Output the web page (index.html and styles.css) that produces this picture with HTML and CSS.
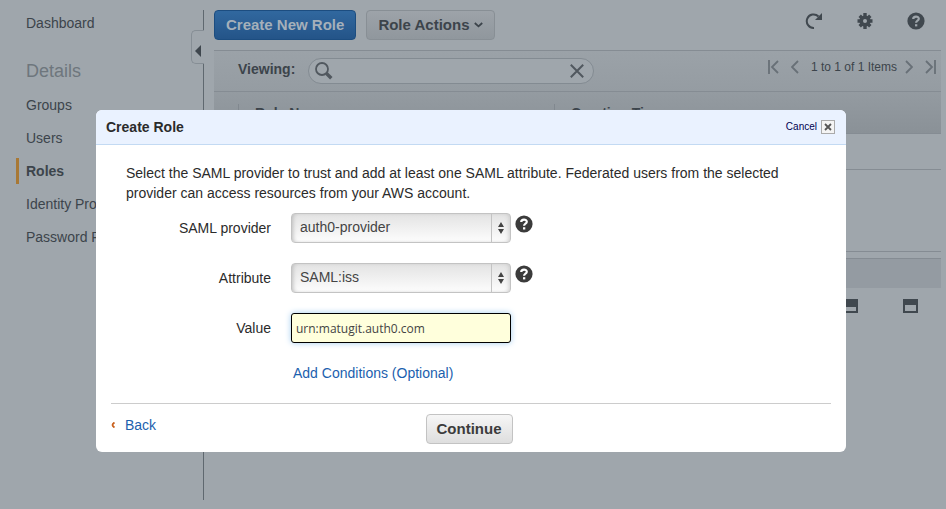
FILE: index.html
```html
<!DOCTYPE html>
<html lang="en">
<head>
<meta charset="utf-8">
<title>Create Role</title>
<link rel="stylesheet" href="styles.css">
</head>
<body>
<div class="console">
  <nav class="sidebar">
    <a class="nav-link" href="#">Dashboard</a>
    <h2 class="nav-heading">Details</h2>
    <a class="nav-link" href="#">Groups</a>
    <a class="nav-link" href="#">Users</a>
    <a class="nav-link nav-current" href="#">Roles</a>
    <a class="nav-link" href="#">Identity Providers</a>
    <a class="nav-link" href="#">Password Policy</a>
    <button class="collapse" type="button" aria-label="Collapse sidebar">
      <svg width="6" height="12" viewBox="0 0 6 12"><path d="M6 0v12L0 6z" fill="#3f474e"/></svg>
    </button>
  </nav>
  <main class="main">
    <div class="toolbar">
      <button class="btn btn-primary" type="button">Create New Role</button>
      <button class="btn btn-muted" type="button">Role Actions
        <svg width="9" height="6" viewBox="0 0 9 6"><path d="M.8 1l3.7 3.4L8.200 1" fill="none" stroke="#3c444b" stroke-width="1.800"/></svg>
      </button>
      <div class="tools">
        <button class="icon-btn" type="button" aria-label="Refresh">
          <svg width="18" height="18" viewBox="0 0 18 18"><path d="M9 16A6.800 6.800 0 1 1 13.500 4.500" fill="none" stroke="#40484f" stroke-width="2"/><path d="M17 1v7h-7z" fill="#40484f"/></svg>
        </button>
        <button class="icon-btn" type="button" aria-label="Settings">
          <svg width="18" height="18" viewBox="0 0 18 18"><g stroke="#40484f" stroke-width="3.400"><path d="M9 1v16M1.500 9h15M3.700 3.700l10.600 10.600M14.300 3.700L3.700 14.300"/></g><circle cx="9" cy="9" r="5.600" fill="#40484f"/><circle cx="9" cy="9" r="2" fill="#9fa6ac"/></svg>
        </button>
        <button class="icon-btn" type="button" aria-label="Help">
          <svg width="18" height="18" viewBox="0 0 18 18"><circle cx="9" cy="9" r="8.600" fill="#40484f"/><path d="M6.200 7.100C6.200 3.800 11.800 3.700 11.800 6.800C11.800 8.700 9.100 8.600 9.100 10.700" fill="none" stroke="#9fa6ac" stroke-width="2.200"/><path d="M8 12.200h2.300v2.200H8z" fill="#9fa6ac"/></svg>
        </button>
      </div>
    </div>
    <div class="filter">
      <label class="filter-label" for="search">Viewing:</label>
      <div class="search">
        <svg width="18" height="18" viewBox="0 0 18 18" fill="none" stroke="#51585f"><circle cx="7" cy="7" r="6" stroke-width="1.800"/><path d="M11.500 11.500l4.800 4.800" stroke-width="3.400"/></svg>
        <input class="search-input" id="search" type="text">
        <button class="icon-btn" type="button" aria-label="Clear">
          <svg width="14" height="14" viewBox="0 0 14 14"><path d="M.8.8l12.400 12.400M13.200.8L.8 13.200" fill="none" stroke="#51585f" stroke-width="2"/></svg>
        </button>
      </div>
      <div class="pager">
        <button class="icon-btn" type="button" aria-label="First page"><svg width="11" height="14" viewBox="0 0 11 14"><path d="M1 0v14M10 1L4 7l6 6" fill="none" stroke="#687077" stroke-width="1.800"/></svg></button>
        <button class="icon-btn" type="button" aria-label="Previous page"><svg width="8" height="14" viewBox="0 0 8 14"><path d="M7 1L1 7l6 6" fill="none" stroke="#687077" stroke-width="1.800"/></svg></button>
        <span class="pager-text">1 to 1 of 1 Items</span>
        <span class="pager-next">
          <button class="icon-btn" type="button" aria-label="Next page"><svg width="8" height="14" viewBox="0 0 8 14"><path d="M1 1l6 6-6 6" fill="none" stroke="#687077" stroke-width="1.800"/></svg></button>
          <button class="icon-btn" type="button" aria-label="Last page"><svg width="11" height="14" viewBox="0 0 11 14"><path d="M10 0v14M1 1l6 6-6 6" fill="none" stroke="#687077" stroke-width="1.800"/></svg></button>
        </span>
      </div>
    </div>
    <table class="roles">
      <colgroup><col class="col-pick"><col class="col-name"><col></colgroup>
      <thead><tr><th></th><th><div class="th-text">Role Name</div></th><th><div class="th-text">Creation Time</div></th></tr></thead>
      <tbody><tr><td></td><td></td><td></td></tr></tbody>
    </table>
    <div class="list-rest"></div>
    <div class="splitter"></div>
    <div class="panes">
      <button class="icon-btn" type="button" aria-label="Half pane"><svg width="15" height="14" viewBox="0 0 15 14"><path d="M0 0h15v14H0zM2 8v4h11V8z" fill="#40484f" fill-rule="evenodd"/></svg></button>
      <button class="icon-btn" type="button" aria-label="Full pane"><svg width="15" height="14" viewBox="0 0 15 14"><path d="M0 0h15v14H0zM2 6v6h11V6z" fill="#40484f" fill-rule="evenodd"/></svg></button>
    </div>
  </main>
</div>

<form class="dialog" role="dialog" aria-labelledby="dialog-title">
  <header class="dialog-head">
    <h1 class="dialog-title" id="dialog-title">Create Role</h1>
    <button class="cancel" type="button">Cancel
      <span class="cancel-box"><svg width="8" height="8" viewBox="0 0 8 8"><path d="M1 1l6 6M7 1L1 7" stroke="#555" stroke-width="1.800"/></svg></span>
    </button>
  </header>
  <div class="dialog-body">
    <p class="intro">Select the SAML provider to trust and add at least one SAML attribute. Federated users from the selected provider can access resources from your AWS account.</p>
    <div class="field">
      <label class="field-label" for="provider">SAML provider</label>
      <div class="picker">
        <select class="select" id="provider"><option>auth0-provider</option></select>
        <span class="arrows"><svg width="6" height="12" viewBox="0 0 6 12"><path d="M0 5l3-5 3 5zM0 7h6l-3 5z" fill="#444"/></svg></span>
      </div>
      <button class="icon-btn help" type="button" aria-label="About SAML provider">
        <svg width="18" height="18" viewBox="0 0 18 18"><circle cx="9" cy="9" r="8.600" fill="#3b3b3b"/><path d="M6.200 7.100C6.200 3.800 11.800 3.700 11.800 6.800C11.800 8.700 9.100 8.600 9.100 10.700" fill="none" stroke="#fff" stroke-width="2.200"/><path d="M8 12.200h2.300v2.200H8z" fill="#fff"/></svg>
      </button>
    </div>
    <div class="field">
      <label class="field-label" for="attribute">Attribute</label>
      <div class="picker">
        <select class="select" id="attribute"><option>SAML:iss</option></select>
        <span class="arrows"><svg width="6" height="12" viewBox="0 0 6 12"><path d="M0 5l3-5 3 5zM0 7h6l-3 5z" fill="#444"/></svg></span>
      </div>
      <button class="icon-btn help" type="button" aria-label="About attribute">
        <svg width="18" height="18" viewBox="0 0 18 18"><circle cx="9" cy="9" r="8.600" fill="#3b3b3b"/><path d="M6.200 7.100C6.200 3.800 11.800 3.700 11.800 6.800C11.800 8.700 9.100 8.600 9.100 10.700" fill="none" stroke="#fff" stroke-width="2.200"/><path d="M8 12.200h2.300v2.200H8z" fill="#fff"/></svg>
      </button>
    </div>
    <div class="field">
      <label class="field-label" for="value">Value</label>
      <input class="value" id="value" type="text" value="urn:matugit.auth0.com">
    </div>
    <a class="conditions" href="#">Add Conditions (Optional)</a>
  </div>
  <footer class="dialog-foot">
    <a class="back" href="#"><svg width="4" height="6" viewBox="0 0 4 6"><path d="M3.500.5Q-.5 3 3.500 5.500" fill="none" stroke="#c9601c" stroke-width="1.800"/></svg>Back</a>
    <button class="btn continue" type="submit">Continue</button>
  </footer>
</form>
</body>
</html>
```
FILE: styles.css
```css
* { box-sizing: border-box; }

body {
  margin: 0;
  min-height: 100vh;
  background: #9fa6ac;
  color: #3c444b;
  font: 14px/20px "Liberation Sans", Arial, sans-serif;
  overflow: hidden;
}

button, input, select { font: inherit; color: inherit; }
svg { display: block; }
a { text-decoration: none; }

.icon-btn {
  padding: 0;
  border: 0;
  background: none;
}

.console {
  display: flex;
  gap: 10px;
  height: 100vh;
  padding: 10px 5px 9px 0;
}

.sidebar {
  position: relative;
  display: flex;
  flex-direction: column;
  flex: 0 0 204px;
  border-right: 1px solid #5f686f;
}

.nav-link {
  height: 26px;
  margin: 0 0 7px 16px;
  padding-left: 10px;
  color: #3c444b;
  line-height: 26px;
  white-space: nowrap;
}

.nav-current {
  padding-left: 7px;
  border-left: 3px solid #a87835;
  font-weight: bold;
}

.nav-heading {
  margin: 15px 0 7px 26px;
  color: #6e767d;
  font-size: 18px;
  font-weight: normal;
  line-height: 27px;
}

.collapse {
  position: absolute;
  top: 20px;
  right: -1px;
  display: flex;
  align-items: center;
  justify-content: flex-end;
  width: 13px;
  height: 34px;
  padding: 8px 3px 0 0;
  border: 1px solid #868e95;
  border-right: 0;
  border-radius: 5px 0 0 5px;
  background: #9fa6ac;
}

.main { flex: 1; }

.toolbar {
  display: flex;
  gap: 10px;
  height: 40px;
}

.btn {
  height: 30px;
  padding: 0 11px;
  border: 1px solid #888f95;
  border-radius: 4px;
  font-size: 15px;
  font-weight: bold;
  white-space: nowrap;
}

.btn-primary {
  border-color: #1c4d80;
  background: linear-gradient(#31689f, #245488);
  color: #a5b0ba;
}

.btn-muted {
  display: flex;
  align-items: center;
  gap: 4px;
  background: linear-gradient(#9da3a9, #90979d);
}

.tools {
  display: flex;
  gap: 33px;
  margin: 2px 16px 0 auto;
  height: 18px;
}

.filter {
  display: flex;
  align-items: center;
  height: 42px;
  padding-left: 24px;
  border: solid #858c93;
  border-width: 1px 0;
  background: linear-gradient(#9ba2a8, #959ca2);
}

.filter-label {
  width: 70px;
  padding-bottom: 4px;
  font-weight: bold;
}

.search {
  display: flex;
  align-items: center;
  width: 286px;
  height: 26px;
  padding: 0 9px 0 6px;
  border: 1px solid #838b92;
  border-radius: 13px;
  background: #9fa6ac;
}

.search-input {
  flex: 1;
  min-width: 0;
  border: 0;
  background: none;
  outline: 0;
}

.pager {
  display: flex;
  align-items: center;
  gap: 12px;
  margin: 0 5px 8px auto;
}

.pager-next {
  display: flex;
  gap: 12px;
  margin-left: -4px;
}

.pager-text { font-size: 12px; white-space: nowrap; }

.roles {
  width: 100%;
  border-collapse: collapse;
  table-layout: fixed;
}

.col-pick { width: 24px; }
.col-name { width: 316px; }

.roles th {
  height: 41px;
  padding: 2px 0 0;
  border-bottom: 1px solid #858c93;
  background: linear-gradient(#949ba1, #8a9197);
  text-align: left;
}

.th-text {
  padding-left: 16px;
  border-left: 1px solid #81888f;
  line-height: 18px;
}

.roles td {
  height: 36px;
  padding: 0;
  border-bottom: 1px solid #858c93;
}

.list-rest {
  height: 82px;
  border-bottom: 1px solid #858c93;
}

.splitter {
  height: 30px;
  margin-top: 6px;
  border-top: 1px solid #858c93;
  background: #949ba2;
}

.panes {
  display: flex;
  justify-content: flex-end;
  gap: 45px;
  padding: 11px 23px 0 0;
}

.dialog {
  position: absolute;
  top: 110px;
  left: 96px;
  right: 100px;
  border-radius: 6px;
  background: #fff;
  color: #2b2b2b;
  overflow: hidden;
}

.dialog-head {
  display: flex;
  align-items: center;
  justify-content: space-between;
  height: 35px;
  padding: 0 11px 0 10px;
  border-bottom: 1px solid #c3daf3;
  background: #eaf2ff;
}

.dialog-title { margin: 0; font-size: 14px; }

.cancel {
  display: flex;
  align-items: center;
  gap: 4px;
  padding: 0;
  border: 0;
  background: none;
  color: #000050;
  font-size: 10px;
}

.cancel-box {
  display: grid;
  place-items: center;
  width: 14px;
  height: 14px;
  border: 1px solid #aaa;
  background: #f4f4f4;
}

.dialog-body { padding: 18px 30px 20px; }

.intro { margin: 0 0 10px; }

.field {
  display: flex;
  height: 30px;
  margin-bottom: 20px;
}

.field-label {
  width: 145px;
  margin-right: 20px;
  line-height: 30px;
  text-align: right;
}

.picker {
  display: grid;
  grid-template-columns: 1fr 20px;
  width: 220px;
  height: 30px;
}

.select {
  grid-area: 1 / 1 / 2 / 3;
  appearance: none;
  padding: 0 28px 2px 8px;
  border: 1px solid #c3c3c3;
  border-radius: 4px;
  background: linear-gradient(#e3e3e3, #fdfdfd);
  box-shadow: inset 3px 0 4px -2px #bbb, inset -3px 0 4px -2px #ccc;
  color: #444;
}

.arrows {
  grid-area: 1 / 2;
  display: grid;
  place-items: center;
  padding-right: 2px;
  border-left: 1px solid #c3c3c3;
  pointer-events: none;
}

.help { height: 18px; margin: 2px 0 0 4px; }

.value {
  width: 220px;
  padding: 0 4px;
  border: 1px solid #000;
  border-radius: 3px;
  outline: 0;
  background: #ffffdc;
  box-shadow: 0 0 6px #a3cdf0;
  color: #444;
  font: 12px "Open Sans", "Noto Sans", sans-serif;
}

.conditions { margin-left: 167px; color: #1c5fae; }

.dialog-foot {
  display: grid;
  grid-template-columns: 1fr auto 1fr;
  margin: 0 15px;
  padding: 10px 4px 8px 0;
  border-top: 1px solid #ccc;
}

.back {
  display: flex;
  align-items: center;
  gap: 10px;
  height: 22px;
  color: #1c5fae;
}

.continue {
  padding: 0 10px;
  border-color: #c3c3c3;
  background: linear-gradient(#f6f6f6, #dedede);
  color: #3c3c3c;
}
```
